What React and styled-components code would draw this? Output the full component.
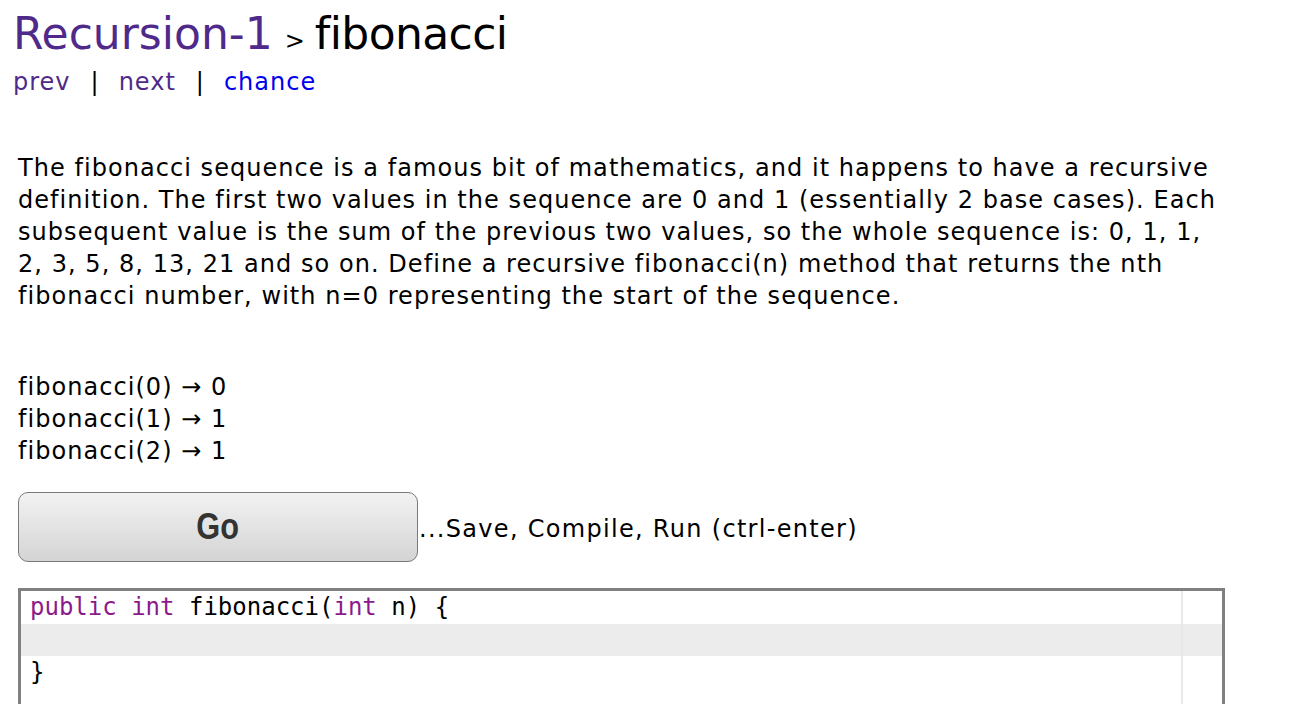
import React from "react";
import styled, { createGlobalStyle } from "styled-components";

const Global = createGlobalStyle`
  html, body { margin: 0; padding: 0; background: #fff; }
  body { font-family: "DejaVu Sans", Verdana, sans-serif; color: #000; }
`;

const Page = styled.div`
  padding: 8px 0 0 18px;
  width: 1199px;
`;

const Header = styled.div`
  margin-left: -5px;
`;

const TitleRow = styled.div`
  display: flex;
  align-items: baseline;
  line-height: 52px;
  white-space: nowrap;
`;

const Crumb = styled.a`
  color: #4f2a8a;
  font-size: 44px;
  text-decoration: none;
`;

const Chevron = styled.span`
  font-size: 24px;
  margin: 0 10px 0 12px;
`;

const Problem = styled.span`
  font-size: 44px;
  letter-spacing: -0.6px;
`;

const NavRow = styled.div`
  display: flex;
  align-items: baseline;
  font-size: 24px;
  line-height: 30px;
  letter-spacing: 1px;
`;

const NavLink = styled.a`
  color: ${(p) => (p.$visited ? "#4f2a8a" : "#0000ee")};
  text-decoration: none;
`;

const Sep = styled.span`
  margin: 0 19px 0 20px;
`;

const Description = styled.p`
  margin: 55px 0 0;
  font-size: 24px;
  line-height: 32px;
  letter-spacing: 1.05px;
`;

const Examples = styled.div`
  margin-top: 59px;
  font-size: 24px;
  line-height: 32px;
  letter-spacing: 1.05px;
`;

const ButtonRow = styled.div`
  display: flex;
  align-items: center;
  margin-top: 25px;
`;

const GoButton = styled.button`
  width: 400px;
  height: 70px;
  border: 1px solid #7a7a7a;
  border-radius: 10px;
  background: linear-gradient(#f2f2f2, #d4d4d4);
  padding: 0;
`;

const GoLabel = styled.span`
  display: inline-block;
  font-family: "Liberation Sans", Arial, sans-serif;
  font-weight: bold;
  font-size: 37px;
  color: #333;
  transform: scaleX(0.83);
`;

const Hint = styled.span`
  font-family: "DejaVu Sans", Verdana, sans-serif;
  font-size: 24px;
  letter-spacing: 1.3px;
  margin-left: 1px;
  margin-top: 4px;
`;

const Editor = styled.div`
  margin-top: 26px;
  width: 1201px;
  height: 140px;
  border: 3px solid #808080;
  position: relative;
  font-family: "DejaVu Sans Mono", "Liberation Mono", monospace;
  font-size: 24px;
  overflow: hidden;
`;

const PrintMargin = styled.div`
  position: absolute;
  top: 0;
  bottom: 0;
  left: 1160px;
  width: 2px;
  background: #e8e8e8;
  z-index: 1;
`;

const Line = styled.div`
  height: 32.5px;
  line-height: 32.5px;
  padding-left: 9px;
  white-space: pre;
  background: ${(p) => (p.$active ? "#ececec" : "transparent")};
`;

const Kw = styled.span`
  color: #8b1a8b;
`;

export default function App() {
  return (
    <Page>
      <Global />
      <Header>
        <TitleRow>
          <Crumb href="#">Recursion-1</Crumb>
          <Chevron>&gt;</Chevron>
          <Problem>fibonacci</Problem>
        </TitleRow>
        <NavRow>
          <NavLink href="#" $visited>prev</NavLink>
          <Sep>|</Sep>
          <NavLink href="#" $visited>next</NavLink>
          <Sep>|</Sep>
          <NavLink href="#">chance</NavLink>
        </NavRow>
      </Header>
      <Description>
        The fibonacci sequence is a famous bit of mathematics, and it happens to have a recursive
        definition. The first two values in the sequence are 0 and 1 (essentially 2 base cases). Each
        subsequent value is the sum of the previous two values, so the whole sequence is: 0, 1, 1,
        2, 3, 5, 8, 13, 21 and so on. Define a recursive fibonacci(n) method that returns the nth
        fibonacci number, with n=0 representing the start of the sequence.
      </Description>
      <Examples>
        <div>fibonacci(0) → 0</div>
        <div>fibonacci(1) → 1</div>
        <div>fibonacci(2) → 1</div>
      </Examples>
      <ButtonRow>
        <GoButton>
          <GoLabel>Go</GoLabel>
        </GoButton>
        <Hint>...Save, Compile, Run (ctrl-enter)</Hint>
      </ButtonRow>
      <Editor>
        <PrintMargin />
        <Line>
          <Kw>public</Kw> <Kw>int</Kw> fibonacci(<Kw>int</Kw> n) {"{"}
        </Line>
        <Line $active> </Line>
        <Line>{"}"}</Line>
      </Editor>
    </Page>
  );
}
